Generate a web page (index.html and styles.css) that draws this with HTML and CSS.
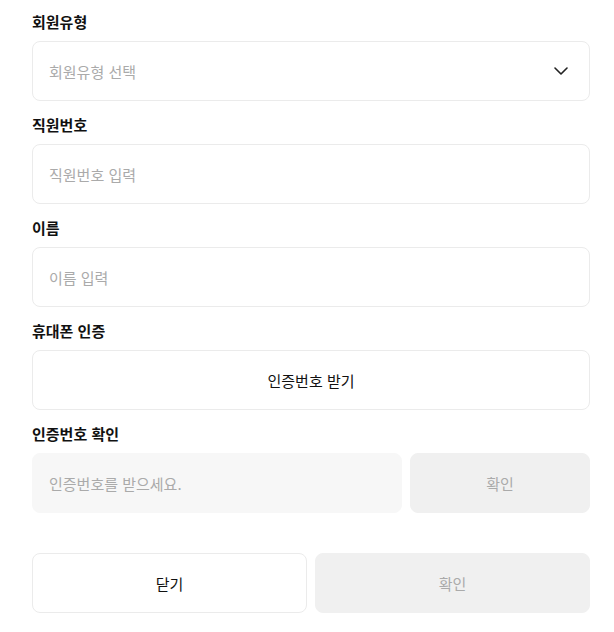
FILE: index.html
```html
<!DOCTYPE html>
<html lang="ko">
<head>
  <meta charset="UTF-8" />
  <meta name="viewport" content="width=device-width, initial-scale=1.0" />
  <title>회원 정보</title>
  <link rel="stylesheet" href="styles.css">
</head>
<body>
  <form class="member-form">
    <div class="field">
      <label class="field-label">회원유형</label>
      <div class="select-box">
        <span class="placeholder">회원유형 선택</span>
        <svg class="chevron" width="14" height="8" viewBox="0 0 14 8" fill="none">
          <path d="M1 1l6 6 6-6" stroke="#222" stroke-width="1.6" stroke-linecap="round" stroke-linejoin="round"/>
        </svg>
      </div>
    </div>

    <div class="field">
      <label class="field-label">직원번호</label>
      <input class="text-input" type="text" placeholder="직원번호 입력">
    </div>

    <div class="field">
      <label class="field-label">이름</label>
      <input class="text-input" type="text" placeholder="이름 입력">
    </div>

    <div class="field">
      <label class="field-label">휴대폰 인증</label>
      <button type="button" class="btn btn-outline">인증번호 받기</button>
    </div>

    <div class="field">
      <label class="field-label">인증번호 확인</label>
      <div class="row">
        <input class="text-input" type="text" placeholder="인증번호를 받으세요." disabled>
        <button type="button" class="btn btn-disabled btn-side" disabled>확인</button>
      </div>
    </div>

    <div class="actions">
      <button type="button" class="btn btn-outline">닫기</button>
      <button type="button" class="btn btn-disabled" disabled>확인</button>
    </div>
  </form>
</body>
</html>
```

FILE: styles.css
```css
* {
  box-sizing: border-box;
}
body {
  margin: 0;
  background: #fff;
  font-family: "Noto Sans CJK KR", "Noto Sans", sans-serif;
  color: #111;
}
.member-form {
  padding: 12px 24px 0 32px;
}
.field {
  display: flex;
  flex-direction: column;
  margin-bottom: 14px;
}
.field-label {
  font-size: 15px;
  font-weight: 700;
  line-height: 20px;
  margin-bottom: 9px;
  color: #111;
}
.select-box,
.text-input,
.btn {
  height: 60px;
  border: 1px solid #ebebeb;
  border-radius: 8px;
  background: #fff;
  font-family: inherit;
  font-size: 15px;
}
.select-box {
  display: flex;
  align-items: center;
  justify-content: space-between;
  padding: 0 21px 0 16px;
  cursor: pointer;
}
.placeholder {
  color: #aaa;
}
.text-input {
  width: 100%;
  padding: 0 16px;
  color: #111;
  outline: none;
}
.text-input::placeholder {
  color: #aaa;
}
.text-input:disabled {
  background: #f7f7f7;
  border-color: #f7f7f7;
}
.row {
  display: flex;
  gap: 8px;
}
.row .text-input {
  flex: 1;
}
.btn {
  color: #111;
  cursor: pointer;
}
.btn-disabled {
  background: #f0f0f0;
  border-color: #f0f0f0;
  color: #aaa;
  cursor: default;
}
.btn-side {
  width: 180px;
  flex-shrink: 0;
}
.actions {
  display: flex;
  gap: 8px;
  margin-top: 40px;
}
.actions .btn {
  flex: 1;
}
```
